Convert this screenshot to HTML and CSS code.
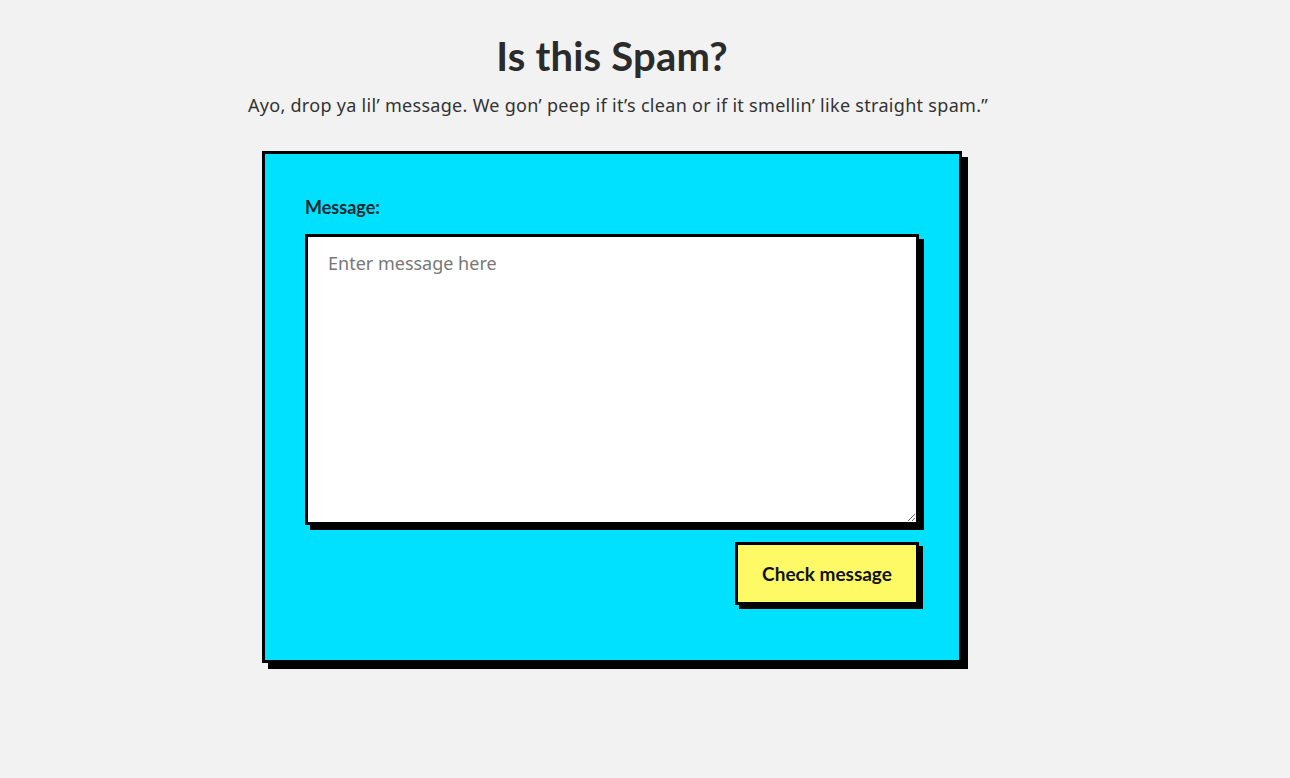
FILE: index.html
```html
<!DOCTYPE html>
<html lang="en">
<head>
<meta charset="utf-8">
<title>Is this Spam?</title>
<link rel="stylesheet" href="styles.css">
</head>
<body>
<main class="page">
  <header class="intro">
    <h1 class="title">Is this Spam?</h1>
    <p class="subtitle">Ayo, drop ya lil’ message. We gon’ peep if it’s clean or if it smellin’ like straight spam.”</p>
  </header>
  <form class="card">
    <label class="label" for="msg">Message:</label>
    <textarea id="msg" class="message" placeholder="Enter message here"></textarea>
    <div class="actions">
      <button type="button" class="check">Check message</button>
    </div>
  </form>
</main>
</body>
</html>
```

FILE: styles.css
```css
* { box-sizing: border-box; }
html, body { margin: 0; padding: 0; }
body {
  background: #f2f2f2;
  color: #2b2b2b;
  font-family: "Lato", "Noto Sans", sans-serif;
  width: 1290px;
  height: 778px;
  overflow: hidden;
}
.page {
  width: 700px;
  margin-left: 262px;
  padding-top: 30px;
}
.intro { text-align: center; }
.title {
  margin: 0;
  font-family: "Lato", sans-serif;
  font-weight: 700;
  font-size: 40px;
  line-height: 52px;
  color: #2b2b2b;
  letter-spacing: 0.2px;
}
.subtitle {
  margin: 11px -40px 0 -28px;
  font-family: "Noto Sans", sans-serif;
  font-size: 18px;
  letter-spacing: 0.3px;
  line-height: 24px;
  color: #333;
}
.card {
  margin-top: 34px;
  background: #00e0ff;
  border: 3px solid #000;
  box-shadow: 6px 6px 0 #000;
  padding: 41px 40px 55px;
  height: 512px;
  display: flex;
  flex-direction: column;
}
.label {
  font-family: "Lato", sans-serif;
  font-weight: 700;
  font-size: 18px;
  color: #1f2a30;
  line-height: 24px;
  margin-bottom: 15px;
}
.message {
  display: block;
  width: 100%;
  height: 291px;
  border: 3px solid #000;
  box-shadow: 5px 5px 0 #000;
  background: #fff;
  padding: 14px 20px;
  font-family: "Noto Sans", sans-serif;
  font-size: 18px;
  color: #222;
  outline: none;
  resize: vertical;
  margin: 0;
}
.message::placeholder { color: #777; }
.actions {
  display: flex;
  justify-content: flex-end;
  margin-top: 17px;
}
.check {
  width: 184px;
  height: 63px;
  background: #fdfa66;
  border: 3px solid #000;
  box-shadow: 4px 4px 0 #000;
  font-family: "Lato", sans-serif;
  font-weight: 700;
  font-size: 19px;
  color: #111;
  cursor: pointer;
  padding: 0;
}
```
